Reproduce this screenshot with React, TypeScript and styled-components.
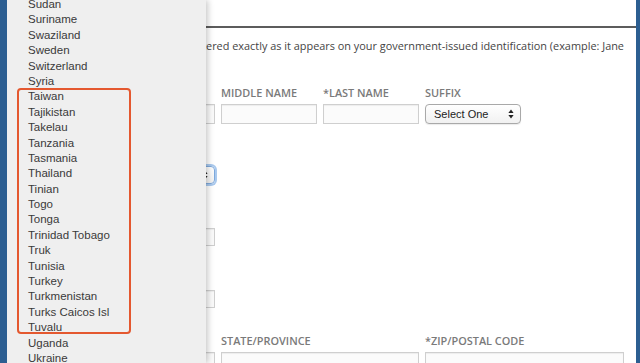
import styled, { createGlobalStyle } from "styled-components";

const GlobalStyle = createGlobalStyle`
  html, body {
    margin: 0;
    padding: 0;
    background: #ffffff;
  }
  #root {
    width: 640px;
    height: 363px;
    overflow: hidden;
  }
`;

const Frame = styled.div`
  display: flex;
  width: 640px;
  height: 363px;
  overflow: hidden;
  font-family: "Open Sans", "Liberation Sans", sans-serif;
`;

const Edge = styled.div<{ $w: number }>`
  flex: 0 0 ${(p) => p.$w}px;
  background: #2c5e91;
`;

const Window = styled.div`
  position: relative;
  flex: 1;
  display: flex;
  flex-direction: column;
  background: #ffffff;
  overflow: hidden;
`;

const Header = styled.div`
  height: 26px;
  flex: 0 0 26px;
  border-bottom: 2px solid #5c5c5c;
`;

const Content = styled.div`
  display: flex;
  flex-direction: column;
  padding: 10px 12px 0 112px;
`;

const Intro = styled.div`
  display: flex;
  justify-content: flex-end;
  height: 16px;
  line-height: 16px;
  font-size: 10.9px;
  color: #444;
  white-space: nowrap;
`;

const Form = styled.div`
  display: flex;
  flex-direction: column;
  gap: 26px;
  margin-top: 32px;
`;

const Row = styled.div<{ $tight?: boolean }>`
  display: grid;
  grid-template-columns: repeat(4, 96px);
  column-gap: 6px;
  margin-bottom: ${(p) => (p.$tight ? "-2px" : "0")};
`;

const Field = styled.div<{ $span?: number; $col?: number }>`
  display: flex;
  flex-direction: column;
  gap: 4px;
  grid-column: ${(p) => (p.$col ? `${p.$col} / span ${p.$span || 1}` : `span ${p.$span || 1}`)};
`;

const Label = styled.div`
  height: 14px;
  line-height: 14px;
  font-size: 10.9px;
  font-weight: 600;
  color: #7a7a7a;
  text-transform: uppercase;
  white-space: nowrap;
`;

const Input = styled.div<{ $h?: number }>`
  height: ${(p) => p.$h || 18}px;
  box-sizing: border-box;
  border: 1px solid #cfcfcf;
  background: #fbfbfb;
  box-shadow: inset 0 1px 1px rgba(0, 0, 0, 0.06);
`;

const Select = styled.div<{ $focus?: boolean; $h?: number }>`
  height: ${(p) => p.$h || 20}px;
  box-sizing: border-box;
  display: flex;
  align-items: center;
  justify-content: space-between;
  padding: 0 6px 0 8px;
  border: 1px solid ${(p) => (p.$focus ? "#7ea9dc" : "#a9a9a9")};
  border-radius: 4px;
  background: linear-gradient(#ffffff, #f1f1f1);
  box-shadow: ${(p) => (p.$focus ? "0 0 0 2px #a9c9ee" : "0 1px 1px rgba(0,0,0,0.08)")};
  font-family: "Liberation Sans", Arial, sans-serif;
  font-size: 11px;
  color: #222;
`;

const Arrows = () => (
  <svg width="6" height="10" viewBox="0 0 6 10">
    <path d="M3 0.5 L5.6 4 H0.4 Z" fill="#222" />
    <path d="M3 9.5 L5.6 6 H0.4 Z" fill="#222" />
  </svg>
);

const Dropdown = styled.div`
  position: absolute;
  left: 0;
  top: 0;
  bottom: 0;
  width: 199px;
  background: #efefef;
  box-shadow: 2px 0 6px rgba(0, 0, 0, 0.22);
`;

const List = styled.ul`
  list-style: none;
  margin: -3px 0 0;
  padding: 0 0 0 21px;
  font-family: "Liberation Sans", Arial, sans-serif;
  font-size: 11.5px;
  color: #3a3a3a;
`;

const Item = styled.li`
  height: 15.4px;
  line-height: 15.4px;
  white-space: nowrap;
`;

const Highlight = styled.div`
  position: absolute;
  left: 10px;
  top: 88px;
  width: 114px;
  height: 246px;
  box-sizing: border-box;
  border: 2px solid #e4582f;
  border-radius: 4px;
`;

const countries = [
  "Sudan",
  "Suriname",
  "Swaziland",
  "Sweden",
  "Switzerland",
  "Syria",
  "Taiwan",
  "Tajikistan",
  "Takelau",
  "Tanzania",
  "Tasmania",
  "Thailand",
  "Tinian",
  "Togo",
  "Tonga",
  "Trinidad Tobago",
  "Truk",
  "Tunisia",
  "Turkey",
  "Turkmenistan",
  "Turks Caicos Isl",
  "Tuvalu",
  "Uganda",
  "Ukraine",
];

function App() {
  return (
    <>
      <GlobalStyle />
      <Frame>
        <Edge $w={7} />
        <Window>
          <Header />
          <Content>
            <Intro>
              Your legal name must be entered exactly as it appears on your government-issued
              identification (example: Jane
            </Intro>
            <Form>
              <Row $tight>
                <Field>
                  <Label>*First Name</Label>
                  <Input $h={20} />
                </Field>
                <Field>
                  <Label>Middle Name</Label>
                  <Input $h={20} />
                </Field>
                <Field>
                  <Label>*Last Name</Label>
                  <Input $h={20} />
                </Field>
                <Field>
                  <Label>Suffix</Label>
                  <Select>
                    Select One
                    <Arrows />
                  </Select>
                </Field>
              </Row>
              <Row>
                <Field>
                  <Label>*Country</Label>
                  <Select $focus $h={18}>
                    United States
                    <Arrows />
                  </Select>
                </Field>
              </Row>
              <Row>
                <Field>
                  <Label>*Address</Label>
                  <Input />
                </Field>
              </Row>
              <Row>
                <Field>
                  <Label>Address 2</Label>
                  <Input />
                </Field>
              </Row>
              <Row>
                <Field>
                  <Label>*City</Label>
                  <Input />
                </Field>
                <Field $span={2}>
                  <Label>State/Province</Label>
                  <Input />
                </Field>
                <Field $span={2} $col={4}>
                  <Label>*Zip/Postal Code</Label>
                  <Input />
                </Field>
              </Row>
            </Form>
          </Content>
          <Dropdown>
            <List>
              {countries.map((c) => (
                <Item key={c}>{c}</Item>
              ))}
            </List>
            <Highlight />
          </Dropdown>
        </Window>
        <Edge $w={4} />
      </Frame>
    </>
  );
}

export default App;
